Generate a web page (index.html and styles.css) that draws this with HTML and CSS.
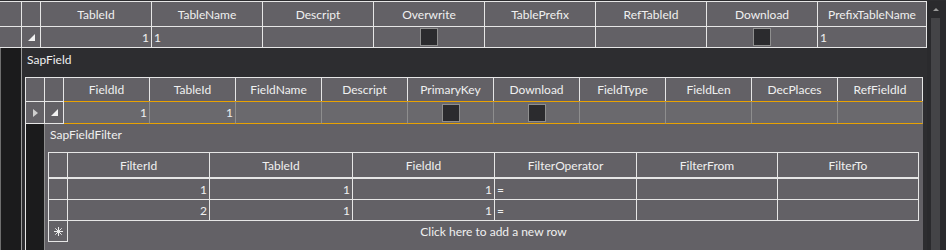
FILE: index.html
```html
<!DOCTYPE html>
<html lang="en">

<head>
    <meta charset="UTF-8">
    <title>SapTable</title>
    <link rel="stylesheet" href="styles.css">
</head>

<body>
    <div class="shell">
        <div class="grid master">
            <div class="row head">
                <div class="cell"></div>
                <div class="cell"></div>
                <div class="cell">TableId</div>
                <div class="cell">TableName</div>
                <div class="cell">Descript</div>
                <div class="cell">Overwrite</div>
                <div class="cell">TablePrefix</div>
                <div class="cell">RefTableId</div>
                <div class="cell">Download</div>
                <div class="cell">PrefixTableName</div>
            </div>
            <div class="row">
                <div class="cell"></div>
                <div class="cell"><i class="expanded"></i></div>
                <div class="cell num">1</div>
                <div class="cell text">1</div>
                <div class="cell"></div>
                <div class="cell"><span class="check"></span></div>
                <div class="cell"></div>
                <div class="cell"></div>
                <div class="cell"><span class="check"></span></div>
                <div class="cell text">1</div>
            </div>

            <div class="detail">
                <div class="gutter"></div>
                <div class="panel dark">
                    <div class="caption">SapField</div>

                    <div class="grid fields">
                        <div class="row head">
                            <div class="cell"></div>
                            <div class="cell"></div>
                            <div class="cell">FieldId</div>
                            <div class="cell">TableId</div>
                            <div class="cell">FieldName</div>
                            <div class="cell">Descript</div>
                            <div class="cell">PrimaryKey</div>
                            <div class="cell">Download</div>
                            <div class="cell">FieldType</div>
                            <div class="cell">FieldLen</div>
                            <div class="cell">DecPlaces</div>
                            <div class="cell">RefFieldId</div>
                        </div>
                        <div class="row selected">
                            <div class="cell"><i class="current"></i></div>
                            <div class="cell"><i class="expanded"></i></div>
                            <div class="cell d num">1</div>
                            <div class="cell d num">1</div>
                            <div class="cell d"></div>
                            <div class="cell d"></div>
                            <div class="cell d"><span class="check"></span></div>
                            <div class="cell d"><span class="check"></span></div>
                            <div class="cell d"></div>
                            <div class="cell d"></div>
                            <div class="cell d"></div>
                            <div class="cell d"></div>
                        </div>

                        <div class="detail">
                            <div class="gutter"></div>
                            <div class="panel light">
                                <div class="caption small">SapFieldFilter</div>

                                <div class="grid filters">
                                    <div class="row head">
                                        <div class="cell"></div>
                                        <div class="cell">FilterId</div>
                                        <div class="cell">TableId</div>
                                        <div class="cell">FieldId</div>
                                        <div class="cell">FilterOperator</div>
                                        <div class="cell">FilterFrom</div>
                                        <div class="cell">FilterTo</div>
                                    </div>
                                    <div class="row">
                                        <div class="cell"></div>
                                        <div class="cell num">1</div>
                                        <div class="cell num">1</div>
                                        <div class="cell num">1</div>
                                        <div class="cell text">=</div>
                                        <div class="cell"></div>
                                        <div class="cell"></div>
                                    </div>
                                    <div class="row">
                                        <div class="cell"></div>
                                        <div class="cell num">2</div>
                                        <div class="cell num">1</div>
                                        <div class="cell num">1</div>
                                        <div class="cell text">=</div>
                                        <div class="cell"></div>
                                        <div class="cell"></div>
                                    </div>
                                    <div class="row new">
                                        <div class="cell">
                                            <svg width="9" height="9" viewBox="0 0 9 9">
                                                <g stroke="#ececec" stroke-width="1">
                                                    <line x1="4.5" y1="0" x2="4.5" y2="9" />
                                                    <line x1="0" y1="4.5" x2="9" y2="4.5" />
                                                    <line x1="1.3" y1="1.3" x2="7.7" y2="7.7" />
                                                    <line x1="7.7" y1="1.3" x2="1.3" y2="7.7" />
                                                </g>
                                            </svg>
                                        </div>
                                        <div class="cell add">Click here to add a new row</div>
                                    </div>
                                </div>
                            </div>
                        </div>
                    </div>
                </div>
            </div>
        </div>

        <div class="vscroll">
            <i class="up"></i>
            <div class="thumb"></div>
        </div>
    </div>
</body>

</html>
```

FILE: styles.css
```css
* {
    box-sizing: border-box;
}

body {
    margin: 0;
    background-color: #2d2d30;
    font-family: Lato, "Open Sans", sans-serif;
    font-size: 12px;
    color: #f0f0f0;
}

.shell {
    display: flex;
    height: 250px;
    padding-top: 1px;
    overflow: hidden;
}

/* generic grid rows and cells */
.row {
    display: grid;
}

.cell {
    display: flex;
    align-items: center;
    justify-content: center;
    background-color: #636166;
    border-right: 1px solid #e6e6e6;
    border-bottom: 1px solid #e6e6e6;
    white-space: nowrap;
    overflow: hidden;
}

.cell.num {
    justify-content: flex-end;
    padding-right: 2px;
}

.cell.text {
    justify-content: flex-start;
    padding-left: 2px;
}

.check {
    width: 18px;
    height: 18px;
    border: 1px solid #8f8f8f;
    background-color: #2b2b2e;
}

/* row glyphs */
.expanded {
    width: 0;
    height: 0;
    border-left: 7px solid transparent;
    border-bottom: 7px solid #f2f2f2;
}

.current {
    width: 0;
    height: 0;
    margin-left: 1px;
    border-left: 5px solid #cfcfcf;
    border-top: 4px solid transparent;
    border-bottom: 4px solid transparent;
}

/* master grid */
.master {
    flex: none;
    width: 927px;
    display: flex;
    flex-direction: column;
}

.master > .row {
    grid-template-columns: 22px 19px repeat(7, 111px) 1fr;
}

.master > .head {
    border-top: 1px solid #e6e6e6;
}

.master > .row .cell {
    height: 25px;
}

.master > .row:not(.head) .cell {
    height: 21px;
}

/* detail area under an expanded row */
.detail {
    flex: 1;
    display: flex;
}

.gutter {
    flex: none;
    background-color: #1b1b1c;
}

.master > .detail > .gutter {
    width: 22px;
    border-left: 1px solid #6e6e6e;
    border-right: 1px solid #9a9a9a;
}

.panel {
    flex: 1;
}

.panel.dark {
    background-color: #2d2d30;
    padding-left: 3px;
}

.panel.light {
    background-color: #636166;
    padding: 0 4px 0 3px;
}

.caption {
    height: 29px;
    padding: 4px 0 0 2px;
    line-height: 16px;
}

.caption.small {
    height: 28px;
    padding-top: 3px;
}

/* SapField grid */
.fields {
    width: 898px;
    height: 100%;
    display: flex;
    flex-direction: column;
    border-left: 1px solid #e6e6e6;
}

.fields > .row {
    grid-template-columns: 19px 19px repeat(9, 86px) 1fr;
}

.fields > .head {
    border-top: 1px solid #e6e6e6;
}

.fields > .head .cell {
    height: 23px;
    border-bottom: none;
}

.fields > .selected .cell {
    height: 23px;
    border-top: 1px solid #e6e6e6;
}

.fields > .selected .cell.d {
    background-color: #6a696d;
    border-top-color: #e8a202;
    border-bottom-color: #e8a202;
    border-right-color: #8e8e8e;
}

.fields > .detail > .gutter {
    width: 19px;
    border-right: 1px solid #8e8e8e;
}

/* SapFieldFilter grid */
.filters {
    width: 871px;
    border-left: 1px solid #e6e6e6;
}

.filters .row {
    grid-template-columns: 19px 142px 143px 142px 142px 141px 141px;
}

.filters .head {
    border-top: 1px solid #e6e6e6;
}

.filters .head .cell {
    height: 26px;
    border-bottom-width: 2px;
}

.filters .row:not(.head) .cell {
    height: 21px;
}

.filters .row.new {
    grid-template-columns: 19px 1fr;
}

.filters .cell.add {
    border: none;
}

/* vertical scrollbar */
.vscroll {
    flex: none;
    width: 19px;
    display: flex;
    flex-direction: column;
    align-items: flex-start;
    padding-left: 4px;
    background-color: #2a2a2d;
}

.vscroll .up {
    margin: 7px 0 0 2px;
    width: 0;
    height: 0;
    border-left: 3px solid transparent;
    border-right: 3px solid transparent;
    border-bottom: 3px solid #9a9a9a;
}

.vscroll .thumb {
    flex: 1;
    width: 9px;
    margin-top: 7px;
    background-color: #444447;
}
```
